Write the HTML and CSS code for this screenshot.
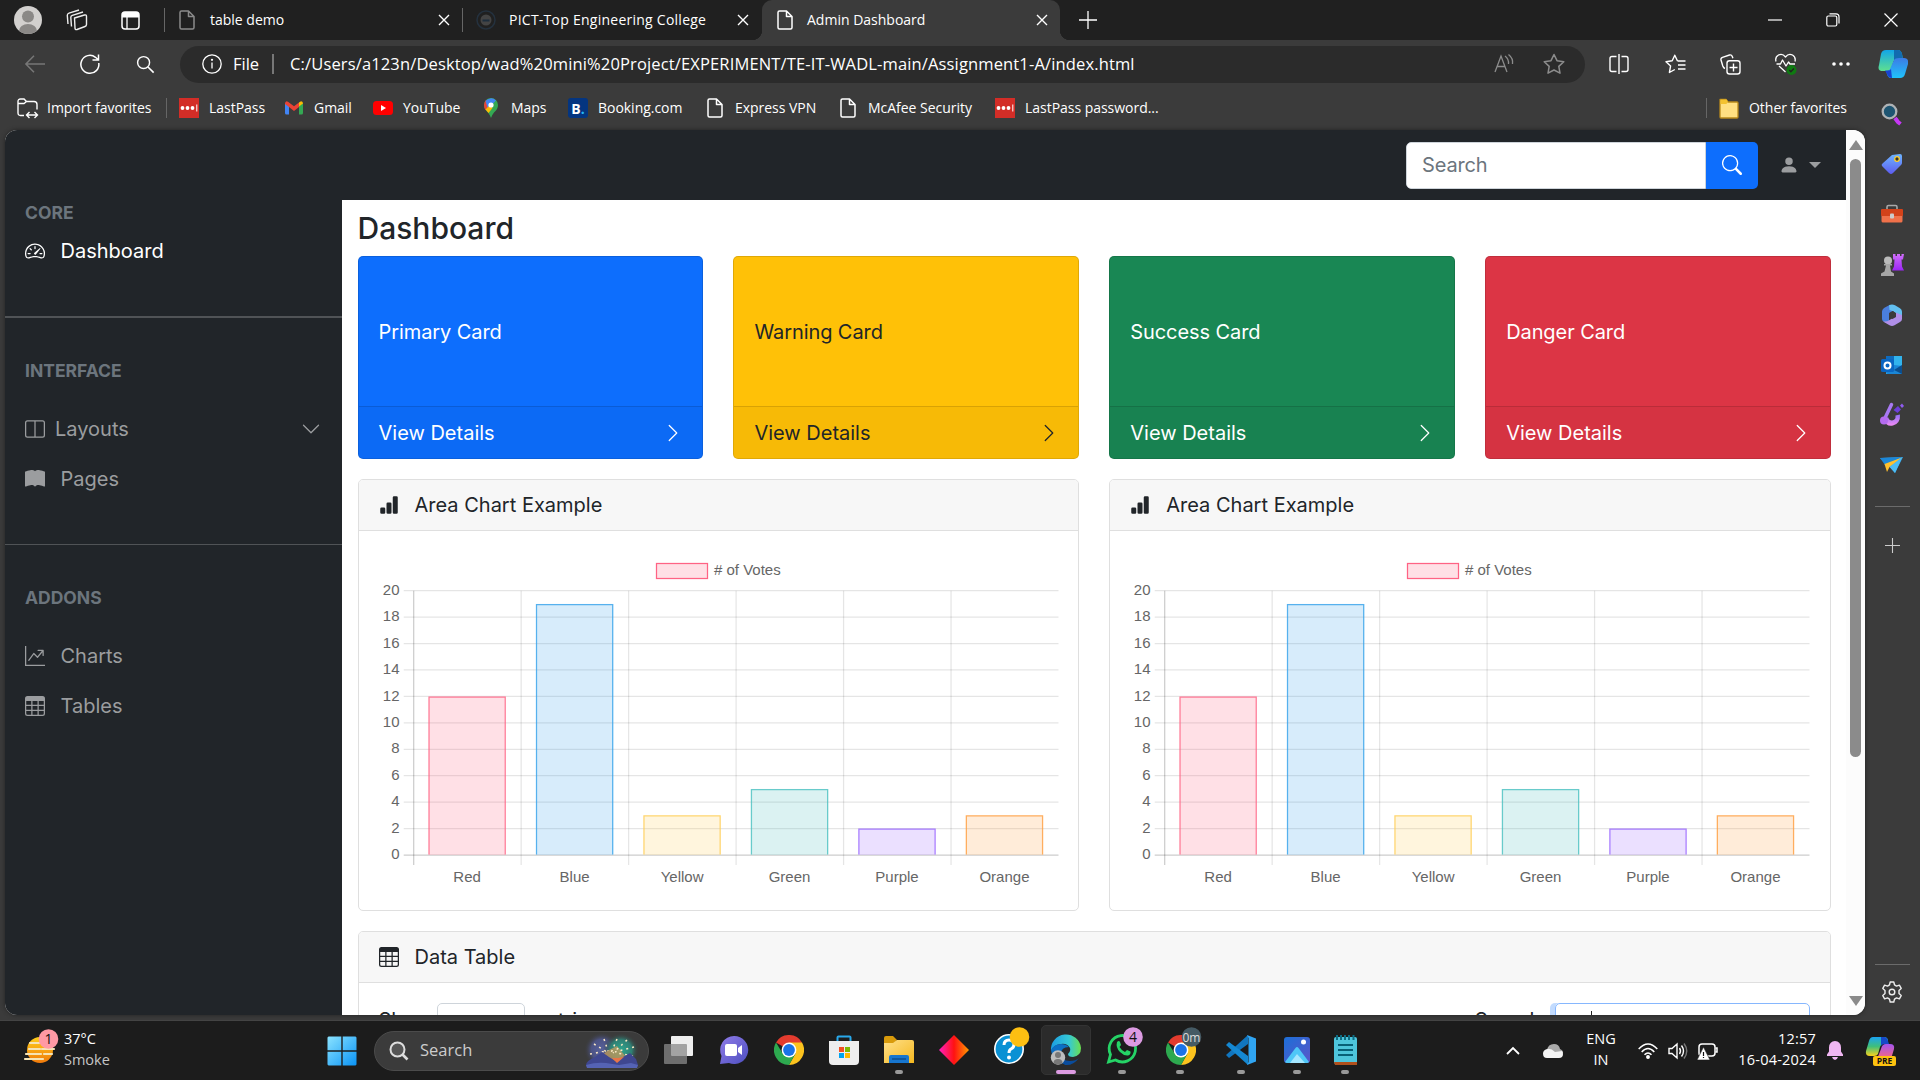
FILE: index.html
```html
<!DOCTYPE html>
<html lang="en">
<head>
<meta charset="utf-8">
<title>Admin Dashboard</title>
<link rel="stylesheet" href="styles.css">
</head>
<body>
<svg class="defs" width="0" height="0" aria-hidden="true">
  <defs>
    <linearGradient id="gTeal" x1="0" y1="0" x2="0" y2="1"><stop offset="0" stop-color="#12a5e8"/><stop offset="1" stop-color="#5fe08f"/></linearGradient>
    <linearGradient id="gBlue" x1="0" y1="0" x2="0" y2="1"><stop offset="0" stop-color="#3c7be6"/><stop offset="1" stop-color="#1fc3fb"/></linearGradient>
    <linearGradient id="gWin" x1="0" y1="0" x2="1" y2="1"><stop offset="0" stop-color="#8be3ff"/><stop offset="1" stop-color="#0a93f5"/></linearGradient>
    <linearGradient id="gTag" x1="0" y1="0" x2="0" y2="1"><stop offset="0" stop-color="#6db5ff"/><stop offset="1" stop-color="#5d5cf0"/></linearGradient>
    <linearGradient id="gPurple" x1="0" y1="0" x2="0" y2="1"><stop offset="0" stop-color="#8f6ff5"/><stop offset="1" stop-color="#f08cf3"/></linearGradient>
    <linearGradient id="gRook" x1="0" y1="0" x2="0" y2="1"><stop offset="0" stop-color="#d06ffa"/><stop offset="1" stop-color="#9b25f5"/></linearGradient>
    <linearGradient id="gFolder" x1="0" y1="0" x2="1" y2="1"><stop offset="0" stop-color="#ffe08a"/><stop offset="1" stop-color="#f5b81f"/></linearGradient>
    <linearGradient id="gDiamond" x1="0" y1="0" x2="1" y2="0"><stop offset="0" stop-color="#ff1fc0"/><stop offset=".5" stop-color="#ff1212"/><stop offset="1" stop-color="#ff9a00"/></linearGradient>
    <linearGradient id="gEdge" x1="0" y1="0" x2="1" y2="0"><stop offset="0" stop-color="#1b9de2"/><stop offset=".6" stop-color="#35c8d6"/><stop offset="1" stop-color="#6be04f"/></linearGradient>
    <linearGradient id="gChat" x1="0" y1="0" x2="1" y2="1"><stop offset="0" stop-color="#8f7be8"/><stop offset="1" stop-color="#4d4fc0"/></linearGradient>
    <linearGradient id="gSun" x1="0" y1="0" x2="0" y2="1"><stop offset="0" stop-color="#ffcf1a"/><stop offset="1" stop-color="#f07a0c"/></linearGradient>
    <linearGradient id="gPhoto" x1="0" y1="0" x2="1" y2="1"><stop offset="0" stop-color="#1c6fd8"/><stop offset="1" stop-color="#5b55c8"/></linearGradient>
    <linearGradient id="gCop1" x1="0" y1="0" x2="0" y2="1"><stop offset="0" stop-color="#1ba4f2"/><stop offset=".5" stop-color="#3fbf7a"/><stop offset="1" stop-color="#f9d21c"/></linearGradient>
    <linearGradient id="gCop2" x1="0" y1="0" x2="0" y2="1"><stop offset="0" stop-color="#a354f0"/><stop offset="1" stop-color="#fa6a78"/></linearGradient>
    <radialGradient id="gSky1"><stop offset="0" stop-color="#58619c"/><stop offset=".6" stop-color="#4c5384"/><stop offset="1" stop-color="#3b3b3b" stop-opacity="0"/></radialGradient>
    <radialGradient id="gSky2"><stop offset="0" stop-color="#2fa58d"/><stop offset=".6" stop-color="#2f8074"/><stop offset="1" stop-color="#3b3b3b" stop-opacity="0"/></radialGradient>
  </defs>
  <symbol id="doc" viewBox="0 0 16 20"><path d="M2.500 1H9.500L15 6.500V17.500a1.500 1.500 0 0 1-1.500 1.500h-11A1.500 1.500 0 0 1 1 17.500v-15A1.500 1.500 0 0 1 2.500 1zM9.500 1V6.500H15" fill="none" stroke="currentColor" stroke-width="1.500" stroke-linejoin="round"/></symbol>
  <symbol id="close" viewBox="0 0 12 12"><path d="M1 1 11 11M11 1 1 11" stroke="currentColor" stroke-width="1.400"/></symbol>
  <symbol id="plus" viewBox="0 0 18 18"><path d="M9 0V18M0 9H18" stroke="currentColor" stroke-width="1.300"/></symbol>
  <symbol id="lastpass" viewBox="0 0 20 20"><path fill="#d32d27" d="M0 0h20v20H0z"/><circle cx="3.500" cy="10" r="1.900" fill="#fff"/><circle cx="8.500" cy="10" r="1.900" fill="#fff"/><circle cx="13.500" cy="10" r="1.900" fill="#fff"/><path d="M17.800 6.500v7" stroke="#fff" stroke-width="1"/></symbol>
  <symbol id="lens" viewBox="0 0 20 20"><circle cx="8" cy="8" r="6.300" fill="none" stroke="currentColor" stroke-width="1.500"/><path d="m12.600 12.600 6 6" stroke="currentColor" stroke-width="1.700"/></symbol>
  <symbol id="copilot" viewBox="0 0 30 28"><path d="M8 0h12q3 0 4 4l1 5h-6q-3 0-4 4l-2 6q-1 2-4 2H5q-6 0-4-6L3 4q1-4 5-4z" fill="url(#gTeal)"/><path d="M16 0h4q3 0 4 4l1 5h-6q-2 0-3 2z" fill="#126bb0"/><path d="M21 8h5q5 0 4 6l-3 10q-1 4-5 4H13q-3 0-4-4l-1-3q3 0 4-2l4-9q1-2 5-2z" fill="url(#gBlue)"/><path d="M7 20.500h3q2 0 3-1.500l1 9q-4 0-5-4z" fill="#1844d0"/></symbol>
  <symbol id="chrome" viewBox="0 0 30 30"><path d="M15 15 2 7.500A15 15 0 0 1 28 7.500z" fill="#e33b2e"/><path d="M28 7.500A15 15 0 0 1 15 30L21.500 18.500 15 7.500z" fill="#fcc31e"/><path d="M2 7.500A15 15 0 0 0 15 30L21.500 18.500 9 19z" fill="#2da94f"/><circle cx="15" cy="15" r="7.400" fill="#fff"/><circle cx="15" cy="15" r="5.900" fill="#1a73e8"/></symbol>
  <symbol id="speedometer" viewBox="0 0 16 16"><path d="M8 4a.5.5 0 0 1 .5.5V6a.5.5 0 0 1-1 0V4.500A.5.5 0 0 1 8 4zM3.732 5.732a.5.5 0 0 1 .707 0l.915.914a.5.5 0 1 1-.708.708l-.914-.915a.5.5 0 0 1 0-.707zM2 10a.5.5 0 0 1 .5-.5h1.586a.5.5 0 0 1 0 1H2.500A.5.5 0 0 1 2 10zm9.500 0a.5.5 0 0 1 .5-.5h1.500a.5.5 0 0 1 0 1H12a.5.5 0 0 1-.5-.5zm.754-4.246a.389.389 0 0 0-.527-.02L7.547 9.310a.91.91 0 1 0 1.302 1.258l3.434-4.297a.389.389 0 0 0-.029-.518z"/><path fill-rule="evenodd" d="M0 10a8 8 0 1 1 15.547 2.661c-.442 1.253-1.845 1.602-2.932 1.250C11.309 13.488 9.475 13 8 13c-1.474 0-3.310.488-4.615.911-1.087.352-2.490.003-2.932-1.250A7.988 7.988 0 0 1 0 10zm8-7a7 7 0 0 0-6.603 9.329c.203.575.923.876 1.680.63C4.397 12.533 6.358 12 8 12s3.604.532 4.923.96c.757.245 1.477-.056 1.680-.631A7 7 0 0 0 8 3z"/></symbol>
  <symbol id="split" viewBox="0 0 16 16"><path d="M0 3a2 2 0 0 1 2-2h12a2 2 0 0 1 2 2v10a2 2 0 0 1-2 2H2a2 2 0 0 1-2-2V3zm8.500-1v12H14a1 1 0 0 0 1-1V3a1 1 0 0 0-1-1H8.500zm-1 0H2a1 1 0 0 0-1 1v10a1 1 0 0 0 1 1h5.500V2z"/></symbol>
  <symbol id="book" viewBox="0 0 16 16"><path d="M8 1.783C7.015.936 5.587.81 4.287.94c-1.514.153-3.042.672-3.994 1.105A.5.5 0 0 0 0 2.500v11a.5.5 0 0 0 .707.455c.882-.4 2.303-.881 3.680-1.020 1.409-.142 2.590.087 3.223.877a.5.5 0 0 0 .78 0c.633-.79 1.814-1.019 3.222-.877 1.378.139 2.800.62 3.681 1.020A.5.5 0 0 0 16 13.500v-11a.5.5 0 0 0-.293-.455c-.952-.433-2.480-.952-3.994-1.105C10.413.809 8.985.936 8 1.783z"/></symbol>
  <symbol id="graph" viewBox="0 0 16 16"><path fill-rule="evenodd" d="M0 0h1v15h15v1H0V0Zm10 3.500a.5.5 0 0 1 .5-.5h4a.5.5 0 0 1 .5.5v4a.5.5 0 0 1-1 0V4.900l-3.613 4.417a.5.5 0 0 1-.74.037L7.060 6.767l-3.656 5.027a.5.5 0 0 1-.808-.588l4-5.500a.5.5 0 0 1 .758-.06l2.609 2.610L13.445 4H10.500a.5.5 0 0 1-.5-.5Z"/></symbol>
  <symbol id="table" viewBox="0 0 16 16"><path d="M0 2a2 2 0 0 1 2-2h12a2 2 0 0 1 2 2v12a2 2 0 0 1-2 2H2a2 2 0 0 1-2-2V2zm15 2h-4v3h4V4zm0 4h-4v3h4V8zm0 4h-4v3h3a1 1 0 0 0 1-1v-2zm-5 3v-3H6v3h4zm-5 0v-3H1v2a1 1 0 0 0 1 1h3zm-4-4h4V8H1v3zm0-4h4V4H1v3zm5-3v3h4V4H6zm4 4H6v3h4V8z"/></symbol>
  <symbol id="bars" viewBox="0 0 16 16"><path d="M1 11a1 1 0 0 1 1-1h2a1 1 0 0 1 1 1v3a1 1 0 0 1-1 1H2a1 1 0 0 1-1-1v-3zm5-4a1 1 0 0 1 1-1h2a1 1 0 0 1 1 1v7a1 1 0 0 1-1 1H7a1 1 0 0 1-1-1V7zm5-5a1 1 0 0 1 1-1h2a1 1 0 0 1 1 1v12a1 1 0 0 1-1 1h-2a1 1 0 0 1-1-1V2z"/></symbol>
  <symbol id="chevron" viewBox="0 0 16 16"><path d="M4.646 1.646a.5.5 0 0 1 .708 0l6 6a.5.5 0 0 1 0 .708l-6 6a.5.5 0 0 1-.708-.708L10.293 8 4.646 2.354a.5.5 0 0 1 0-.708z"/></symbol>
  <symbol id="bisearch" viewBox="0 0 16 16"><path d="M11.742 10.344a6.500 6.500 0 1 0-1.397 1.398h-.001c.03.04.062.078.098.115l3.850 3.850a1 1 0 0 0 1.415-1.414l-3.850-3.850a1.007 1.007 0 0 0-.115-.1zM12 6.500a5.500 5.500 0 1 1-11 0 5.500 5.500 0 0 1 11 0z"/></symbol>
  <symbol id="person" viewBox="0 0 16 16"><path d="M3 14s-1 0-1-1 1-4 6-4 6 3 6 4-1 1-1 1H3zm5-6a3 3 0 1 0 0-6 3 3 0 0 0 0 6z"/></symbol>
</svg>

<div class="browser">
  <div class="tabstrip">
    <div class="cell c56"><svg width="28" height="28" viewBox="0 0 28 28"><clipPath id="av"><circle cx="14" cy="14" r="14"/></clipPath><g clip-path="url(#av)"><path fill="#d2d0ce" d="M0 0h28v28H0z"/><circle cx="14" cy="10.500" r="6" fill="#8a8886"/><ellipse cx="14" cy="25" rx="9" ry="7" fill="#8a8886"/></g></svg></div>
    <div class="cell c42"><svg width="22" height="22" viewBox="0 0 22 22" fill="none" stroke="#eee" stroke-width="1.400" stroke-linejoin="round"><path d="m8.500 9 10-3q2-.5 2 1.500v8q0 1.500-1.500 2l-8 3q-2 .5-2-1.500z"/><path d="M5.500 17.500 4.800 8.500Q4.700 7 6.300 6.400L17 3"/><path d="M2 15 1.300 6.500Q1.200 4.800 3 4.200L13 1"/></svg></div>
    <div class="cell c64"><svg width="19" height="19" viewBox="0 0 19 19"><rect x="1" y="1" width="17" height="17" rx="3" fill="none" stroke="#fff" stroke-width="1.500"/><path d="M1 4q0-3 3-3h11q3 0 3 3v2.500H1z" fill="#fff"/><path d="M6 6v12" stroke="#fff" stroke-width="1.300"/></svg></div>
    <div class="tab first"><svg class="dim" width="16" height="20"><use href="#doc"/></svg><span>table demo</span><svg class="x" width="12" height="12"><use href="#close"/></svg></div>
    <div class="tab second"><svg width="20" height="20" viewBox="0 0 20 20"><circle cx="10" cy="10" r="9" fill="none" stroke="#24313e" stroke-width="1.500"/><circle cx="10" cy="10" r="5.500" fill="#444"/><path d="M6.500 9.500h7v2h-7z" fill="#1d2d3c"/></svg><span>PICT-Top Engineering College</span><svg class="x" width="12" height="12"><use href="#close"/></svg></div>
    <div class="tab active"><svg width="16" height="20"><use href="#doc"/></svg><span>Admin Dashboard</span><svg class="x" width="12" height="12"><use href="#close"/></svg></div>
    <div class="cell c56"><svg width="18" height="18"><use href="#plus"/></svg></div>
    <div class="windowbtns">
      <div class="cell"><svg width="14" height="14"><path d="M0 7h14" stroke="#fff" stroke-width="1.200"/></svg></div>
      <div class="cell"><svg width="14" height="14" fill="none" stroke="#fff" stroke-width="1.200"><rect x=".8" y="3" width="10" height="10" rx="1.500"/><path d="M3.500.8H10q3 0 3 3V10.500"/></svg></div>
      <div class="cell"><svg width="14" height="14"><path d="M.5.5l13 13M13.500.5l-13 13" stroke="#fff" stroke-width="1.200"/></svg></div>
    </div>
  </div>

  <div class="toolbar">
    <div class="cell c70"><svg width="20" height="18" viewBox="0 0 20 18" fill="none" stroke="#777" stroke-width="1.500"><path d="M9 .8.9 9 9 17.200M1 9h19"/></svg></div>
    <div class="cell c40"><svg width="20" height="20" viewBox="0 0 20 20" fill="none" stroke="#fff" stroke-width="1.500"><path d="M18.800 9A9 9 0 1 1 15.500 3.300L18 5.500M18.500.5v5.500h-6"/></svg></div>
    <div class="cell c70"><svg class="white" width="19" height="19"><use href="#lens"/></svg></div>
    <div class="address">
      <svg width="20" height="20" viewBox="0 0 20 20" fill="none" stroke="#fff" stroke-width="1.300"><circle cx="10" cy="10" r="9.200"/><path d="M10 8.500V14.500"/><circle cx="10" cy="5.800" r=".5"/></svg>
      <span class="scheme">File</span><span class="sep"></span><span class="url">C:/Users/a123n/Desktop/wad%20mini%20Project/EXPERIMENT/TE-IT-WADL-main/Assignment1-A/index.html</span>
      <svg class="aloud" width="20" height="20" viewBox="0 0 20 20" fill="none" stroke="#8c8c8c" stroke-width="1.300"><path d="M1 18 7 2l6 16M3 12.500h8M11 2q4 3 3.500 8M14.500.5q5 4 4 9.500"/></svg>
      <svg width="22" height="22" viewBox="0 0 22 22" fill="none" stroke="#8c8c8c" stroke-width="1.500" stroke-linejoin="round"><path d="m11 1.500 3 6.200 6.800 1-5 4.700 1.200 6.800-6-3.200-6 3.200 1.200-6.800-5-4.700 6.800-1z"/></svg>
    </div>
    <div class="actions">
      <div class="cell"><svg width="20" height="20" viewBox="0 0 20 20" fill="none" stroke="#fff" stroke-width="1.400"><path d="M7.500 2.500H3Q1 2.500 1 4.500v11q0 2 2 2h4.500M12.500 2.500H17q2 0 2 2v11q0 2-2 2h-4.500M10 0v20"/></svg></div>
      <div class="cell"><svg width="21" height="20" viewBox="0 0 21 20" fill="none" stroke="#fff" stroke-width="1.400" stroke-linejoin="round"><path d="M12.500 7 9.800 1.200 7.200 6.800 1 7.700l4.600 4.200-1.200 6.600 5.400-3M13 11h7.500M13 15h7.500M12.500 7h8"/></svg></div>
      <div class="cell"><svg width="21" height="21" viewBox="0 0 21 21" fill="none" stroke="#fff" stroke-width="1.400"><path d="M5 14.500Q3.500 14 2.800 12L1 6Q.6 4 2.500 3.300L9.500 1q2-.5 2.800 1.500l.6 1.700"/><rect x="7" y="6.700" width="13" height="13.300" rx="2.500"/><path d="M13.500 9.500v8M9.500 13.500h8"/></svg></div>
      <div class="cell"><svg width="22" height="22" viewBox="0 0 22 22" fill="none" stroke="#fff" stroke-width="1.300" stroke-linejoin="round"><path d="M1 8.500Q-.2 4 3.500 2 7.500 0 10.500 4 13.500 0 17.500 2 21 4 20 8.500M1.500 11h4l2-4 3.500 6 2.500-4 1.500 2h5M4 13l6.500 6"/><circle cx="16.500" cy="17" r="5" fill="#0f7a12" stroke="none"/><path d="m14.300 17 1.600 1.700 3-3.200" stroke="#222"/></svg></div>
      <div class="cell"><svg width="18" height="4" fill="#fff"><circle cx="2" cy="2" r="1.800"/><circle cx="9" cy="2" r="1.800"/><circle cx="16" cy="2" r="1.800"/></svg></div>
      <div class="cell"><svg width="30" height="28"><use href="#copilot"/></svg></div>
    </div>
  </div>

  <div class="body">
    <div class="left">
      <div class="bookmarks">
        <div class="bm"><svg width="21" height="20" viewBox="0 0 21 20" fill="none" stroke="#fff" stroke-width="1.400"><path d="M7 17.500H3.500Q1 17.500 1 15V3.500Q1 1 3.500 1H7L9.500 3.500H17q3 0 3 3V11.500M1 5.500h6l2.500-2M9.500 17h11M12.500 14l-3 3 3 3M17.500 14l3 3-3 3"/></svg><span class="b1">Import favorites</span></div>
        <div class="bm"><svg width="20" height="20"><use href="#lastpass"/></svg><span>LastPass</span></div>
        <div class="bm"><svg width="20" height="20" viewBox="0 0 20 20"><path d="M1 5v10q0 1.500 1.500 1.500H5V8z" fill="#4285f4"/><path d="M19 5v10q0 1.500-1.500 1.500H15V8z" fill="#34a853"/><path d="m15 8.500 4-3V5q-1-2.500-3-1.200l-1 .8z" fill="#fbbc04"/><path d="M1 5q1-2.500 3-1.200L10 8.200l5-3.700V9l-5 4L5 9 1 6z" fill="#ea4335"/></svg><span>Gmail</span></div>
        <div class="bm"><svg width="20" height="20" viewBox="0 0 20 20"><rect y="3" width="20" height="14" rx="3.500" fill="#f00"/><path d="m8 7 5 3-5 3z" fill="#fff"/></svg><span>YouTube</span></div>
        <div class="bm"><svg width="20" height="20" viewBox="0 0 20 20"><path d="M3 7a7 7 0 0 1 14 0Q17 11 13 14.500 11 17 10 20 9 17 7 14.500 3 11 3 7z" fill="#34a853"/><path d="M3 7a7 7 0 0 1 2-5l5 5-5.500 5Q3 10 3 7z" fill="#ea4335"/><path d="M4.500 3A7 7 0 0 1 15 2.500L7 11z" fill="#4285f4"/><path d="M4.500 11.500 9 7l2.500 3-4 5z" fill="#fbbc04"/><circle cx="10" cy="7" r="2.600" fill="#fff"/></svg><span>Maps</span></div>
        <div class="bm"><span class="booking">B<i>.</i></span><span>Booking.com</span></div>
        <div class="bm"><svg width="20" height="20"><use href="#doc"/></svg><span>Express VPN</span></div>
        <div class="bm"><svg width="20" height="20"><use href="#doc"/></svg><span>McAfee Security</span></div>
        <div class="bm"><svg width="20" height="20"><use href="#lastpass"/></svg><span>LastPass password...</span></div>
        <div class="bm other"><svg width="20" height="21" viewBox="0 0 20 21"><path d="M1 1.500H7l2 2.500h9q1 0 1 1v14q0 1-1 1H2q-1 0-1-1z" fill="#ffe082" stroke="#b98a1b" stroke-width="1.300" stroke-linejoin="round"/><path d="M1.500 1.500H7.500L8.800 3.500 7.500 6h-6z" fill="#f3c230"/></svg><span>Other favorites</span></div>
      </div>

      <div class="viewport">
        <div class="app">
          <nav class="navbar">
            <div class="search"><div class="field">Search</div><div class="go"><svg width="20" height="20"><use href="#bisearch"/></svg></div></div>
            <div class="user"><svg width="20" height="20"><use href="#person"/></svg><span class="caret"></span></div>
          </nav>
          <div class="columns">
            <aside class="sidebar">
              <div class="label">CORE</div>
              <div class="item current"><svg width="20" height="20"><use href="#speedometer"/></svg><span>Dashboard</span></div>
              <hr class="thick">
              <div class="label">INTERFACE</div>
              <div class="group">
                <div class="item tight"><svg width="20" height="20"><use href="#split"/></svg><span>Layouts</span><svg class="down" width="20" height="20"><use href="#chevron"/></svg></div>
                <div class="item"><svg width="20" height="20"><use href="#book"/></svg><span>Pages</span></div>
              </div>
              <hr>
              <div class="label">ADDONS</div>
              <div class="group">
                <div class="item"><svg width="20" height="20"><use href="#graph"/></svg><span>Charts</span></div>
                <div class="item"><svg width="20" height="20"><use href="#table"/></svg><span>Tables</span></div>
              </div>
            </aside>
            <main>
              <h4>Dashboard</h4>
              <div class="cards">
                <div class="tile primary"><div class="tbody">Primary Card</div><div class="tfoot">View Details<svg width="20" height="20"><use href="#chevron"/></svg></div></div>
                <div class="tile warning"><div class="tbody">Warning Card</div><div class="tfoot">View Details<svg width="20" height="20"><use href="#chevron"/></svg></div></div>
                <div class="tile success"><div class="tbody">Success Card</div><div class="tfoot">View Details<svg width="20" height="20"><use href="#chevron"/></svg></div></div>
                <div class="tile danger"><div class="tbody">Danger Card</div><div class="tfoot">View Details<svg width="20" height="20"><use href="#chevron"/></svg></div></div>
              </div>
              <div class="charts">
                <section class="panel"><header><svg width="20" height="20"><use href="#bars"/></svg>Area Chart Example</header><div class="plot"><svg class="chart" width="680" height="340"></svg></div></section>
                <section class="panel"><header><svg width="20" height="20"><use href="#bars"/></svg>Area Chart Example</header><div class="plot"><svg class="chart" width="680" height="340"></svg></div></section>
              </div>
              <section class="panel data"><header><svg width="20" height="20"><use href="#table"/></svg>Data Table</header>
                <div class="controls"><span class="show">Show</span><span class="select"></span><span>entries</span><span class="find">Search:</span><span class="input"><i></i></span></div>
              </section>
            </main>
          </div>
        </div>
        <div class="scrollbar"><span class="up"></span><span class="thumb"></span><span class="dn"></span></div>
      </div>
    </div>

    <div class="rail">
      <div class="cell"><svg width="22" height="22" viewBox="0 0 22 22"><path d="m14 15 3 4 2.500 2" stroke="#c637f5" stroke-width="4"/><circle cx="8.500" cy="8.500" r="6.800" fill="#1e5572" stroke="#aeb2b5" stroke-width="2.300"/></svg></div>
      <div class="cell"><svg width="22" height="22" viewBox="0 0 22 22"><path d="M11 2 19 1q2 0 2 2v7q0 1-1 2l-8 8q-2 2-4 0L1 13q-1-1.500.5-2.500z" fill="url(#gTag)"/><circle cx="16" cy="6" r="2.300" fill="#333" stroke="#ffd02b" stroke-width="1.300"/></svg></div>
      <div class="cell"><svg width="24" height="20" viewBox="0 0 24 20"><path d="M7 6V3q0-1.500 1.500-1.500h7Q17 1.500 17 3v3" fill="none" stroke="#a9a9a9" stroke-width="1.600"/><rect x="1.500" y="9" width="21" height="9.500" rx="1.500" fill="#f0714a"/><rect x="1" y="5" width="22" height="7" rx="1" fill="#d3421a"/><rect x="10" y="9.500" width="4" height="5" rx="1" fill="#ccc"/></svg></div>
      <div class="cell"><svg width="24" height="24" viewBox="0 0 24 24"><path d="M13 1h2.500v2H17V1h3v2h1.500V1H24l-1 5.500h-1.500l.5 7 2 4H12l2-4 .5-7H13z" fill="url(#gRook)"/><circle cx="8" cy="7.500" r="4" fill="#bbb"/><path d="M4 11h8v1.500h-2l1 6 3 2V23H1v-2.500l3.500-2 1.500-6H4z" fill="#a6a6a6"/></svg></div>
      <div class="cell"><svg width="22" height="22" viewBox="0 0 22 22"><path d="M9 .7 3 4Q1 5.500 1 7.500V15q0 1.500 1.500 2.500L8 20V9.500L14 6z" fill="#4a7fdd"/><path d="M8 1.300q3-1.800 6 0l5 3q2 1.200 2 3.500v5.500L14.500 10Q14 7 8.500 6z" fill="#62bff0"/><path d="M21 11v4q0 2-2 3l-5.500 3.300q-2.500 1.200-5 0L2 17.500q4 .5 6.500-1.500l6-3.500V8.500z" fill="#b08fe8"/><path d="m8 9 3.500-2 3.500 2v4l-3.500 2L8 13z" fill="#3b3b3b"/></svg></div>
      <div class="cell"><svg width="22" height="22" viewBox="0 0 22 22"><path d="M5 2h16v18H5z" fill="#32b4ed"/><path d="M5 2h8v8H5z" fill="#0f6bbd"/><path d="m5 10 16 2v8H7q-2 0-2-2z" fill="#1a86d6"/><path d="m21 11-8 5 8 4z" fill="#0b4e8e"/><rect y="5" width="13" height="13" rx="1.500" fill="#0a66c2"/><circle cx="6.500" cy="11.500" r="3" fill="none" stroke="#fff" stroke-width="2"/></svg></div>
      <div class="cell"><svg width="24" height="25" viewBox="0 0 24 25"><path d="M4 17Q6 24 13 22.500 20.500 20.500 20 11.500l-4.500 1Q16 17 12 17.500 9 17.500 8 14z" fill="url(#gPurple)"/><path d="M11.500 1.500 5 15" stroke="#a778f2" stroke-width="3.500" stroke-linecap="round"/><circle cx="4" cy="17.500" r="4" fill="#b46bf0"/><path d="m18 3 3 3.500-3.500 3.500-4-3z" fill="#6c3fd8"/><path d="M22 .5 24 3l-2 2-2-2.500z" fill="#8f5cf0"/></svg></div>
      <div class="cell"><svg width="24" height="18" viewBox="0 0 24 18"><path d="m0 2 23-1-8 16-5-6z" fill="#37a9f0"/><path d="M0 2 23 1 5 9z" fill="#1c87d8"/><path d="M4.500 8 22 1.500 9.500 11 7 16z" fill="#ffc02e"/><path d="M22 1.500 9.500 11 15 17z" fill="#4cbcf5"/></svg></div>
      <span class="rule"></span>
      <div class="cell add"><svg width="15" height="15" class="soft"><use href="#plus"/></svg></div>
      <span class="rule bottom"></span>
      <div class="cell gear"><svg width="22" height="22" viewBox="0 0 22 22" fill="none" stroke="#eee" stroke-width="1.400" stroke-linejoin="round"><path d="M9.200 1h3.600l.7 2.900 2 1.200 2.900-.9 1.800 3.200-2.200 2v3.200l2.200 2-1.800 3.200-2.900-.9-2 1.200-.7 2.900H9.200l-.7-2.900-2-1.200-2.900.9-1.800-3.200 2.200-2V9.400l-2.200-2 1.800-3.200 2.900.9 2-1.200z"/><circle cx="11" cy="11" r="2.800"/></svg></div>
    </div>
  </div>
</div>

<div class="taskbar">
  <div class="weather"><svg width="34" height="36" viewBox="0 0 34 36"><circle cx="16" cy="21" r="13" fill="url(#gSun)"/><path d="M6 14h9M5 20h11M18 20h12M2 25h15M20 25h8M1 30h18" stroke="#f5e3b5" stroke-width="2.200" stroke-linecap="round"/><circle cx="24.500" cy="10" r="9.800" fill="#ff99a4"/><text x="24.500" y="15" text-anchor="middle" font-size="14" fill="#111">1</text></svg><div><b>37°C</b><em>Smoke</em></div></div>
  <svg class="start" width="30" height="30" viewBox="0 0 30 30" fill="url(#gWin)"><path d="M1.500.5H14.300v13.800H.5V1.500zM15.700.5H28.500l1 1V14.300H15.700zM.5 15.700H14.300v13.800H1.500l-1-1zM15.700 15.700H29.500v12.800l-1 1H15.700z"/></svg>
  <div class="pill"><svg class="light" width="20" height="20" viewBox="0 0 20 20" fill="none" stroke="currentColor"><circle cx="8.500" cy="8.500" r="7" fill="#555" stroke-width="2"/><path d="m13.500 13.500 5 5" stroke-width="2.600"/></svg><span>Search</span><svg class="fireworks" width="54" height="34" viewBox="0 0 54 34"><ellipse cx="17" cy="16" rx="18" ry="18" fill="url(#gSky1)"/><ellipse cx="36" cy="16" rx="18" ry="17" fill="url(#gSky2)"/><path d="M14 24 22 17l10-5 10 12-8 4z" fill="#c79a5c" opacity=".75"/><g stroke="#fbe8c4" stroke-width="1.500" stroke-dasharray="2 4"><path d="M5 20 22 17M9 10l13 8M19 5l4 12M32 5l-6 14M42 6 28 19M49 13 30 18M48 22l-16-3"/></g><path d="M1 31q0-4 9-8l7-5 7 5 8 5 6-5 7-4 6 6 2 6-1 2H2z" fill="#3f4790"/><path d="M1 31q10-3 20-2l13 2 12-2 7 2-1 3H2z" fill="#5563b4"/><path d="m27 24 5 5 7-6-6 1z" fill="#e87548"/></svg></div>
  <div class="apps">
    <div class="cell"><svg width="30" height="30" viewBox="0 0 30 30"><rect x="7" y="1" width="22" height="20" rx="1" fill="#eee"/><rect x="0" y="9" width="23" height="20" rx="1" fill="#8a8a8a" opacity=".75"/></svg></div>
    <div class="cell"><svg width="30" height="30" viewBox="0 0 30 30"><path d="M15 1a14 14 0 1 1-5 27L1 29 2.500 21A14 14 0 0 1 15 1z" fill="url(#gChat)"/><rect x="6" y="9" width="12" height="12" rx="2" fill="#fff"/><path d="m19 13 4-3v10l-4-3z" fill="#fff"/></svg></div>
    <div class="cell"><svg width="30" height="30"><use href="#chrome"/></svg></div>
    <div class="cell"><svg width="30" height="30" viewBox="0 0 30 30"><path d="M8.500 7V2.500q0-1 1-1h11q1 0 1 1V7" fill="none" stroke="#28a8ea" stroke-width="2"/><path d="M0 6h30v20q0 4-4 4H4q-4 0-4-4z" fill="#eee"/><path fill="#f25022" d="M10 12h5v5h-5z"/><path fill="#7fba00" d="M16 12h5v5h-5z"/><path fill="#00a4ef" d="M10 18h5v5h-5z"/><path fill="#ffb900" d="M16 18h5v5h-5z"/></svg></div>
    <div class="cell run"><svg width="30" height="28" viewBox="0 0 30 28"><path d="M0 2q0-2 2-2h7l4 4-3 4H0z" fill="#d99b0b"/><path d="M0 7h9l4-3h15q2 0 2 2v21H0z" fill="url(#gFolder)"/><path d="M5 27v-6q0-2 2-2h16q2 0 2 2v6z" fill="#1776cf"/><path d="M8 23h14" stroke="#0d4f91" stroke-width="1.500"/></svg></div>
    <div class="cell"><svg width="30" height="30"><path d="M15 0 30 15 15 30 0 15z" fill="url(#gDiamond)"/></svg></div>
    <div class="cell"><svg width="36" height="38" viewBox="0 0 36 38"><circle cx="16" cy="22" r="14.200" fill="#0a91d4" stroke="#fff" stroke-width="1.600"/><path d="M11 18q0-5 5-5t5 4.500q0 3-3 4.500-2 1-2 4" fill="none" stroke="#fff" stroke-width="3"/><circle cx="16" cy="30.500" r="2" fill="#fff"/><circle cx="26.500" cy="10" r="9.800" fill="#fdbf12"/></svg></div>
    <div class="cell focus"><svg width="30" height="30" viewBox="0 0 30 30"><path d="M0 16A15 15 0 0 1 30 13q0 8-8 9-5 0-5-3 3-3 2-6Q16 8 10 9 2 10 0 16z" fill="url(#gEdge)"/><path d="M0 15q3-6 10-6 5 0 8 3-8 0-8 7 1 8 10 9a15 15 0 0 1-20-13z" fill="#0c6fc4"/><path d="M10 18q0 8 9 8 6 0 9-3-6 8-14 7-6-4-4-12z" fill="#0a4c9c"/><circle cx="7" cy="22.500" r="7.200" fill="#bdbdbd"/><circle cx="7" cy="20" r="3" fill="#777"/><path d="M2.500 28q0-4 4.500-4t4.500 4q-4.500 3-9 0z" fill="#777"/></svg></div>
    <div class="cell run"><svg class="badged" width="38" height="38" viewBox="0 0 38 38"><path d="M4.500 35l2-7.500A13.200 13.200 0 1 1 11.500 33z" fill="none" stroke="#25d366" stroke-width="2.800"/><path d="M13 15q2-2 3 0l1 3-1.500 2q2 3.500 5.500 5l2-2 3.500 1.500q.5 3-2.500 4-4 .5-8-3.500-4.500-4.500-3-10z" fill="#25d366"/><circle cx="29" cy="10" r="9.800" fill="#dc9be2"/><text x="29" y="15" text-anchor="middle" font-size="14" fill="#111">4</text></svg></div>
    <div class="cell run"><svg class="badged" width="38" height="38" viewBox="0 0 38 38"><svg x="4" y="8" width="30" height="30"><use href="#chrome"/></svg><circle cx="29.500" cy="10" r="9.800" fill="#455a64"/><text x="29.500" y="14.500" text-anchor="middle" font-size="12" fill="#ddd">0m</text></svg></div>
    <div class="cell run"><svg width="30" height="30" viewBox="0 0 30 30"><path d="M22 0v9L3 23l-3-3z" fill="#1176bf"/><path d="M0 10 3 7l19 14v9z" fill="#1588d2"/><path d="m21 0 9 3.500v23L21 30l1.500-3V3z" fill="#30a5f2"/></svg></div>
    <div class="cell run"><svg width="26" height="26" viewBox="0 0 26 26"><rect width="26" height="26" rx="3" fill="url(#gPhoto)"/><path d="M1 25 11.500 11q1.500-2 3 0L25 25q-1 1-2 1H3q-1 0-2-1z" fill="#4fc7f7"/><path d="m6 26 7-9 8 9z" fill="#a5e7ff"/><circle cx="19.500" cy="5" r="2.500" fill="#fff"/></svg></div>
    <div class="cell run"><svg width="23" height="30" viewBox="0 0 23 30"><rect y="2" width="23" height="27" rx="2" fill="#4ec5dc"/><path d="M0 27h23v3H1z" fill="#b0501c"/><path d="M3 0v5M7 0v5M11 0v5M15 0v5M19.500 0v5" stroke="#0d6d83" stroke-width="2"/><path d="M4 10h15M4 15h15M4 20h15" stroke="#086078" stroke-width="1.800"/></svg></div>
  </div>
  <div class="tray">
    <div class="cell t1"><svg width="14" height="9"><path d="m1 8 6-6 6 6" fill="none" stroke="#fff" stroke-width="1.800"/></svg></div>
    <div class="cell t2"><svg width="20" height="14" viewBox="0 0 20 14"><path d="M4 6Q5 0 11 0q5 0 6 5 3 1 3 4L10 9z" fill="#aaa"/><path d="M4 5q4-1 8 3l7-1q1 1 1 3 0 4-4 4H4Q0 14 0 9.500 0 6 4 5z" fill="#f4f4f4"/></svg></div>
    <div class="lang"><span>ENG</span><span>IN</span></div>
    <div class="cell t3"><svg width="20" height="16" viewBox="0 0 20 16" fill="none" stroke="#fff" stroke-width="1.500"><path d="M.7 6Q10-4 19.300 6M3.700 9Q10 2 16.300 9M6.500 11.800Q10 8 13.500 11.800"/><circle cx="10" cy="14" r="1.200" fill="#fff"/></svg></div>
    <div class="cell t4"><svg width="20" height="18" viewBox="0 0 20 18" fill="none" stroke="#fff" stroke-width="1.400"><path d="M1 6.500h3L9 2v14l-5-4.500H1zM11.500 6q2 3 0 6M13.500 3.500q4 5.500 0 11"/><path d="M16 1.500q5.500 7.500 0 15" stroke="#777"/></svg></div>
    <div class="cell t5"><svg width="20" height="18" viewBox="0 0 20 18"><rect x="1" y="2" width="16" height="12" rx="3" fill="none" stroke="#fff" stroke-width="1.500"/><path d="M17.500 6h1.500v4h-1.500" stroke="#fff" stroke-width="1.500" fill="none"/><path d="m5.500 5 6.500 13H-1z" fill="#fff" stroke="#1c1c1c" stroke-width=".6"/><path d="M5.500 10v4m0 1v1" stroke="#111" stroke-width="1.200"/></svg></div>
    <div class="clock"><span>12:57</span><span>16-04-2024</span></div>
    <div class="cell t6"><svg width="16" height="19" viewBox="0 0 16 19"><path d="M0 15v-1.500l2-3V6.500Q2.500 0 8 0t6 6.500v4l2 3V15zM5 16h6q-1 3-3 3t-3-3z" fill="#f0b6f2"/></svg></div>
    <div class="cell t7"><svg width="30" height="30" viewBox="0 0 30 30"><path d="M7 1h11q4 0 4 4v3h-5q-2 0-3 3l-2 7q-1 2-4 2H4q-5 0-4-5L3 5q1-4 4-4z" fill="url(#gCop1)"/><path d="M15 1h3q3 0 4 4l1 3h-5q-2 0-3 2z" fill="#1749c8"/><path d="M20 8h4q5 0 4 5l-3 10H11l4-10q1-5 5-5z" fill="url(#gCop2)"/><rect x="7" y="20" width="23" height="10" rx="2" fill="#fdc20f"/><text x="18.500" y="28" text-anchor="middle" font-size="8.500" font-weight="700" fill="#111">PRE</text></svg></div>
  </div>
</div>
<script src="chart.js"></script>
</body>
</html>
```
FILE: styles.css
```css
* { box-sizing: border-box; }
body { margin: 0; width: 1920px; height: 1080px; overflow: hidden; background: #3b3b3b; color: #fff; font-family: "Open Sans", "Noto Sans", sans-serif; font-size: 14px; }
svg { display: block; flex: none; overflow: visible; }
.defs { position: absolute; }
span { white-space: nowrap; }
.cell { display: flex; align-items: center; justify-content: center; flex: none; }
.c40 { width: 40px; } .c42 { width: 42px; } .c56 { width: 56px; } .c64 { width: 64px; } .c70 { width: 70px; }
.browser { height: 1021px; display: flex; flex-direction: column; border-bottom: 1px solid #444; }

.tabstrip { height: 40px; background: #202020; display: flex; flex: none; }
.tab { display: flex; align-items: center; position: relative; height: 40px; }
.tab span { flex: 1; padding-bottom: 2px; }
.first { width: 299px; margin-left: 2px; padding: 0 13px 0 15px; gap: 15px; }
.first::before, .first::after { content: ""; position: absolute; top: 8px; height: 24px; width: 1px; background: #666; left: 0; }
.first::after { left: auto; right: 0; }
.second { width: 299px; padding: 0 13px 0 13px; gap: 13px; }
.tab.second span { letter-spacing: .25px; }
.active { width: 298px; padding: 0 12px 0 15px; gap: 14px; background: #3b3b3b; border-radius: 10px 10px 0 0; }
.active::before, .active::after { content: ""; position: absolute; bottom: 0; width: 10px; height: 10px; left: -10px; background: radial-gradient(circle at 0 0, transparent 10px, #3b3b3b 10.5px); }
.active::after { left: auto; right: -10px; background: radial-gradient(circle at 100% 0, transparent 10px, #3b3b3b 10.5px); }
.dim { color: #8a8a8a; }
.soft { color: #ccc; }
.light { color: #ddd; }
.windowbtns { margin-left: auto; display: flex; }
.windowbtns .cell { width: 58px; }

.toolbar { height: 48px; display: flex; align-items: center; flex: none; }
.address { width: 1405px; height: 37px; border-radius: 19px; background: #2b2b2b; display: flex; align-items: center; padding: 0 20px 0 22px; font-size: 16.5px; }
.scheme { margin-left: 11px; width: 39px; padding-bottom: 2px; }
.sep { width: 2px; height: 20px; background: #777; }
.url { margin-left: 16px; flex: 1; letter-spacing: .145px; padding-bottom: 2px; }
.aloud { margin-right: 29px; }
.actions { display: grid; grid-template-columns: 56px 56px 55px 55px 55px 50px; margin-left: 6px; }

.body { display: flex; flex: 1; min-height: 0; }
.left { width: 1865px; display: flex; flex-direction: column; }
.bookmarks { height: 42px; padding: 0 0 2px 17px; display: grid; grid-template-columns: 162px 105px 89px 108px 87px 137px 133px 157px 711px 141px; align-items: center; }
.bm { display: flex; align-items: center; gap: 10px; letter-spacing: -.03px; position: relative; }
.bm > span:last-child { padding-bottom: 2px; }
.bm .b1 { margin-left: -1px; }
.bm:nth-child(2)::before, .other::before { content: ""; position: absolute; left: -13px; top: 0; height: 20px; width: 1px; background: #666; }
.other { padding-left: 13px; }
.bm.other::before { left: 0; }
.booking { width: 20px; height: 20px; background: #043580; border-radius: 3px; font-weight: 700; display: flex; align-items: center; justify-content: center; }
.booking i { color: #26b8f5; font-style: normal; }

.viewport { height: 885px; margin-left: 5px; border-radius: 12px; overflow: hidden; display: flex; background: #fff; font-family: Inter, sans-serif; font-size: 20px; flex: none; box-shadow: 0 0 4px #222; }
.app { width: 1841px; display: flex; flex-direction: column; flex: none; }
.navbar { height: 70px; background: #212529; display: flex; justify-content: flex-end; align-items: center; padding-right: 25px; flex: none; }
.search { display: flex; width: 352px; height: 47px; border-radius: 5px; overflow: hidden; }
.field { flex: 1; background: #fff; border: 1px solid #ced4da; color: #6c757d; padding-left: 15px; display: flex; align-items: center; border-radius: 5px 0 0 5px; letter-spacing: -.15px; }
.go { width: 52px; background: #0d6efd; display: grid; place-items: center; fill: #fff; }
.user { width: 63px; padding-left: 21px; display: flex; align-items: center; fill: #9b9d9f; }
.caret { margin-left: 10px; border: 6px solid transparent; border-top-color: #9b9d9f; border-bottom: 0; }
.columns { display: flex; flex: 1; min-height: 0; }
.sidebar { width: 337px; background: #212529; flex: none; color: #9b9d9f; fill: currentColor; }
.label { height: 26px; padding-left: 20px; line-height: 26px; font-size: 17.5px; font-weight: 700; color: #6c757d; }
.item { height: 50px; padding: 0 21px 0 20px; display: flex; align-items: center; gap: 15.5px; }
.tight { gap: 10px; }
.current { color: #fff; }
.down { margin-left: auto; transform: rotate(90deg); }
.group { padding-top: 19.5px; }
.sidebar hr { height: 1px; border: 0; margin: 40.5px 0 40px; background: #505356; }
.sidebar hr.thick { height: 2px; margin: 40px 0; }
.sidebar hr:not(.thick) + .label + .group { padding-top: 20px; }
main { flex: 1; padding: 0 15px 0 15.5px; color: #212529; fill: #212529; overflow: hidden; }
h4 { margin: 0; height: 56px; font-size: 30px; font-weight: 500; line-height: 36px; padding-top: 10px; }
.cards { display: grid; grid-template-columns: repeat(4, 1fr); gap: 30px; }
.tile { height: 203px; border: 1px solid rgba(0,0,0,.125); border-radius: 5px; color: #fff; fill: currentColor; display: flex; flex-direction: column; overflow: hidden; }
.tbody { flex: 1; padding-left: 20px; display: flex; align-items: center; letter-spacing: -.08px; }
.tfoot { height: 52px; padding: 1px 19.5px 0 20px; border-top: 1px solid rgba(0,0,0,.125); background: rgba(0,0,0,.03); display: flex; align-items: center; justify-content: space-between; }
.primary { background-color: #0d6efd; } .warning { background-color: #ffc107; color: #212529; } .success { background-color: #198754; } .danger { background-color: #dc3545; }
.charts { display: grid; grid-template-columns: 1fr 1fr; gap: 30px; margin: 20px 0; }
.panel { height: 432px; border: 1px solid #dfdfdf; border-radius: 5px; overflow: hidden; }
.panel header { height: 51px; background: #f7f7f7; border-bottom: 1px solid #dfdfdf; padding-left: 20px; display: flex; align-items: center; gap: 16px; }
.plot { padding: 20px; }
.controls { display: flex; align-items: flex-start; padding: 20px 20px 0; line-height: 34px; }
.show { width: 58px; }
.select { width: 88px; height: 38px; border: 1px solid #ced4da; border-radius: 5px; margin-right: 10px; }
.find { margin-left: auto; margin-right: 8px; }
.input { width: 255px; height: 38px; border: 1px solid #86b7fe; border-radius: 5px; box-shadow: -5px 0 0 #c2dbfe; padding: 7px 0 0 35px; }
.input i { display: block; width: 1px; height: 24px; background: #222; }
.scrollbar { width: 19px; background: #fcfcfc; display: flex; flex-direction: column; align-items: center; padding: 10px 0 9px; }
.up, .dn { border: 7px solid transparent; border-bottom: 10px solid #8a8a8a; border-top: 0; }
.dn { border-top: 10px solid #8a8a8a; border-bottom: 0; margin-top: auto; }
.thumb { width: 11px; height: 598px; margin-top: 9px; border-radius: 6px; background: #8b8b8b; }

.rail { width: 55px; display: flex; flex-direction: column; align-items: center; padding: 1px 1px 0 0; }
.rail .cell { height: 50.2px; }
.rule { width: 35px; height: 1px; background: #6b6b6b; margin-top: 15px; flex: none; }
.rail .add { height: 77px; }
.rule.bottom { margin-top: 380px; }
.rail .gear { height: 55px; }

.taskbar { height: 59px; background: #1c1c1c; display: flex; align-items: center; }
.taskbar text { font-family: "Open Sans", sans-serif; }
.weather { width: 327px; padding-left: 24px; display: flex; align-items: center; gap: 6px; }
.weather > svg { margin-top: -8px; }
.weather b, .weather em { display: block; font-weight: 400; font-style: normal; font-size: 14.5px; line-height: 20.5px; }
.weather div { padding-bottom: 2px; }
.weather em { color: #c5c5c5; }
.pill { width: 275px; height: 40px; margin: 0 3px 0 17px; border: 1px solid #4b4b4b; border-radius: 20px; background: #3b3b3b; display: flex; align-items: center; padding: 0 9px 0 14px; font-size: 16.5px; color: #ccc; gap: 11px; }
.pill span { padding-bottom: 2px; }
.fireworks { margin-left: auto; }
.apps { height: 59px; display: grid; grid-template-columns: 54px 55px 55px 55px 55px 55px 56px 57px 56px 60px 62px 50px 46px; }
.apps .cell { position: relative; padding-bottom: 1px; }
.apps .cell:nth-child(7) svg { margin: -8px 0 0 4px; }
.badged { margin: -8px 0 0 2px; }
.run::after, .focus::after { content: ""; position: absolute; bottom: 6px; left: calc(50% - 4px); width: 8px; height: 4px; border-radius: 2px; background: #999; }
.focus { margin: 4px 3.5px 5px; background: #2b2b2b; border: 1px solid #333; border-radius: 5px; }
.focus::after { bottom: 0; left: calc(50% - 10px); width: 20px; background: #dc9be2; }
.tray { flex: 1; display: flex; align-items: center; }
.t1 { width: 40px; margin-left: 125px; } .t2 { width: 40px; }
.lang, .clock { display: flex; flex-direction: column; line-height: 20.5px; padding-bottom: 2px; font-size: 14.5px; }
.lang { width: 56px; align-items: center; }
.t3 { width: 38px; } .t4 { width: 22px; } .t5 { width: 38px; }
.clock { width: 89px; align-items: flex-end; letter-spacing: .2px; }
.t6 { width: 38px; } .t7 { width: 53px; }
```
FILE: chart.js
```js
const votes = [
  ['Red', 12, '255,99,132'],
  ['Blue', 19, '54,162,235'],
  ['Yellow', 3, '255,206,86'],
  ['Green', 5, '75,192,192'],
  ['Purple', 2, '153,102,255'],
  ['Orange', 3, '255,159,64']
];

function drawChart(svg) {
  const left = 34.7, right = 679.5, top = 39.7, bottom = 304;
  const step = (right - left) / votes.length;
  const unit = (bottom - top) / 20;
  const font = 'font-family="Liberation Sans, Arial, sans-serif" font-size="15" fill="#666"';
  const line = (x1, y1, x2, y2, alpha) =>
    `<path d="M${x1} ${y1}L${x2} ${y2}" stroke="rgba(0,0,0,${alpha})" stroke-width="1.25"/>`;
  let out = '';
  for (let v = 0; v <= 20; v += 2) {
    const y = bottom - v * unit;
    out += line(left - 10, y, right, y, v ? 0.1 : 0.2);
    out += `<text x="20.5" y="${y + 4.2}" text-anchor="end" ${font}>${v}</text>`;
  }
  votes.forEach(([name, value, rgb], i) => {
    const x = left + i * step;
    out += line(x, top, x, bottom + 10, i ? 0.1 : 0.2);
    const w = step * 0.72, bx = x + step * 0.14 - 0.3, y = bottom - value * unit;
    out += `<rect x="${bx}" y="${y}" width="${w}" height="${value * unit}" fill="rgba(${rgb},.2)"/>`;
    out += `<path d="M${bx + .6} ${bottom - .6}V${y + .6}H${bx + w - .6}V${bottom - .6}" fill="none" stroke="rgb(${rgb})" stroke-opacity=".8" stroke-width="1.25"/>`;
    out += `<text x="${x + step / 2 - .3}" y="331" text-anchor="middle" ${font}>${name}</text>`;
  });
  out += '<rect x="277.5" y="12.5" width="51" height="15" fill="rgba(255,99,132,.2)" stroke="rgb(255,99,132)" stroke-width="1.25"/>';
  out += `<text x="335" y="24" ${font}># of Votes</text>`;
  svg.innerHTML = out;
}

document.querySelectorAll('.chart').forEach(drawChart);
```
